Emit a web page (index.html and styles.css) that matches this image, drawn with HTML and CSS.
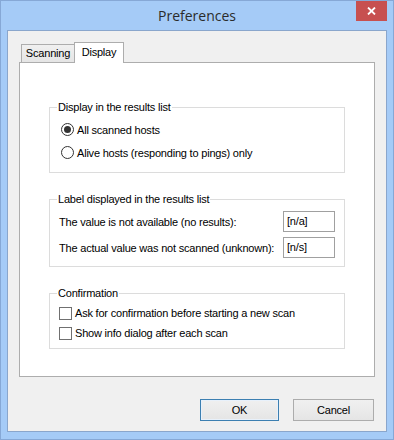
FILE: index.html
```html
<!DOCTYPE html>
<html>
<head>
<link rel="stylesheet" href="styles.css">
</head>
<body>
<div class="window">
  <div class="titlebar">
    <span class="title">Preferences</span>
    <span class="close">
      <svg width="9" height="8" viewBox="0 0 9 8"><path d="M1 0.5 L8 7.5 M8 0.5 L1 7.5" stroke="#fff" stroke-width="1.8" fill="none"/></svg>
    </span>
  </div>

  <div class="client">
    <div class="tabs">
      <div class="tab">Scanning</div>
      <div class="tab active">Display</div>
    </div>

    <div class="panel">
      <fieldset class="group group-display">
        <legend>Display in the results list</legend>
        <label class="row"><span class="radio checked"></span>All scanned hosts</label>
        <label class="row"><span class="radio"></span>Alive hosts (responding to pings) only</label>
      </fieldset>

      <fieldset class="group group-label">
        <legend>Label displayed in the results list</legend>
        <div class="field">
          <span>The value is not available (no results):</span>
          <span class="input">[n/a]</span>
        </div>
        <div class="field">
          <span>The actual value was not scanned (unknown):</span>
          <span class="input">[n/s]</span>
        </div>
      </fieldset>

      <fieldset class="group group-confirm">
        <legend>Confirmation</legend>
        <label class="row check-row"><span class="checkbox"></span>Ask for confirmation before starting a new scan</label>
        <label class="row check-row"><span class="checkbox"></span>Show info dialog after each scan</label>
      </fieldset>
    </div>

    <div class="buttons">
      <button class="btn btn-default">OK</button>
      <button class="btn btn-cancel">Cancel</button>
    </div>
  </div>
</div>
</body>
</html>
```

FILE: styles.css
```css
html, body {
  margin: 0;
  padding: 0;
}

body {
  font-family: "Liberation Sans", Arial, sans-serif;
  font-size: 11px;
  letter-spacing: -0.2px;
  color: #000;
  white-space: nowrap;
}

.window {
  height: 440px;
  box-sizing: border-box;
  border: 1px solid #86a8d6;
  background-color: #a5cbf7;
  display: flex;
  flex-direction: column;
}

.titlebar {
  height: 29px;
  display: grid;
  grid-template-columns: 1fr auto 1fr;
  padding: 0 6px;
}

.title {
  grid-column: 2;
  font-family: "Open Sans", "Noto Sans", sans-serif;
  font-size: 14px;
  letter-spacing: 0;
  line-height: 29px;
  color: #2b2b2b;
}

.close {
  grid-column: 3;
  justify-self: end;
  width: 31px;
  height: 20px;
  background-color: #c75050;
  display: flex;
  align-items: center;
  justify-content: center;
}

.client {
  flex: 1;
  margin: 0 6px 7px 6px;
  border: 1px solid #8aa6cc;
  background-color: #f0f0f0;
  padding: 11px 11px 0 11px;
  display: flex;
  flex-direction: column;
}

.tabs {
  display: flex;
  align-items: flex-end;
  height: 21px;
  padding-left: 2px;
  margin-bottom: -1px;
  position: relative;
  z-index: 1;
}

.tab {
  box-sizing: border-box;
  height: 18px;
  margin-bottom: 1px;
  width: 54px;
  border: 1px solid #adadad;
  border-bottom: none;
  background: linear-gradient(#f0f0f0, #e5e5e5);
  text-align: center;
  line-height: 17px;
}

.tab.active {
  height: 21px;
  width: 50px;
  margin-left: -1px;
  margin-bottom: 0;
  background: #fff;
  line-height: 19px;
}

.panel {
  height: 315px;
  box-sizing: border-box;
  background-color: #fff;
  border: 1px solid #adadad;
  padding: 37px 29px 0 29px;
}

.group {
  margin: 0 0 19px 0;
  padding: 4px 0 8px 0;
  border: 1px solid #dcdcdc;
  min-width: 0;
}

.group legend {
  margin-left: 7px;
  padding: 0 1px;
  line-height: 14px;
}

.row {
  display: flex;
  align-items: center;
  height: 23px;
  padding-left: 11px;
}

.radio {
  width: 13px;
  height: 13px;
  box-sizing: border-box;
  border: 1px solid #333;
  border-radius: 50%;
  background: #fff;
  margin-right: 3px;
  display: flex;
  align-items: center;
  justify-content: center;
}

.radio.checked::after {
  content: "";
  width: 7px;
  height: 7px;
  border-radius: 50%;
  background: #333;
}

.group-label {
  padding: 5px 0 8px 0;
}

.field {
  display: flex;
  align-items: center;
  height: 21px;
  padding-left: 9px;
  margin-bottom: 5px;
}

.field:last-child {
  margin-bottom: 0;
}

.input {
  margin-left: auto;
  margin-right: 9px;
  width: 52px;
  height: 21px;
  box-sizing: border-box;
  border: 1px solid #a0a0a0;
  padding-left: 3px;
  line-height: 19px;
}

.group-confirm {
  padding: 3px 0 5px 0;
}

.check-row {
  height: 20px;
  padding-left: 9px;
}

.checkbox {
  width: 13px;
  height: 13px;
  box-sizing: border-box;
  border: 1px solid #707070;
  background: #fff;
  margin-right: 3px;
}

.buttons {
  display: flex;
  justify-content: flex-end;
  gap: 14px;
  margin-top: 22px;
  margin-right: 1px;
}

.btn {
  height: 22px;
  box-sizing: border-box;
  font-family: "Liberation Sans", Arial, sans-serif;
  font-size: 11px;
  letter-spacing: -0.2px;
  color: #000;
  background: linear-gradient(#f0f0f0, #e5e5e5);
  border: 1px solid #acacac;
  padding: 0;
}

.btn-default {
  width: 79px;
  border-color: #3c7fb1;
  box-shadow: inset 0 0 0 1px #e8f1fb;
}

.btn-cancel {
  width: 81px;
}
```
